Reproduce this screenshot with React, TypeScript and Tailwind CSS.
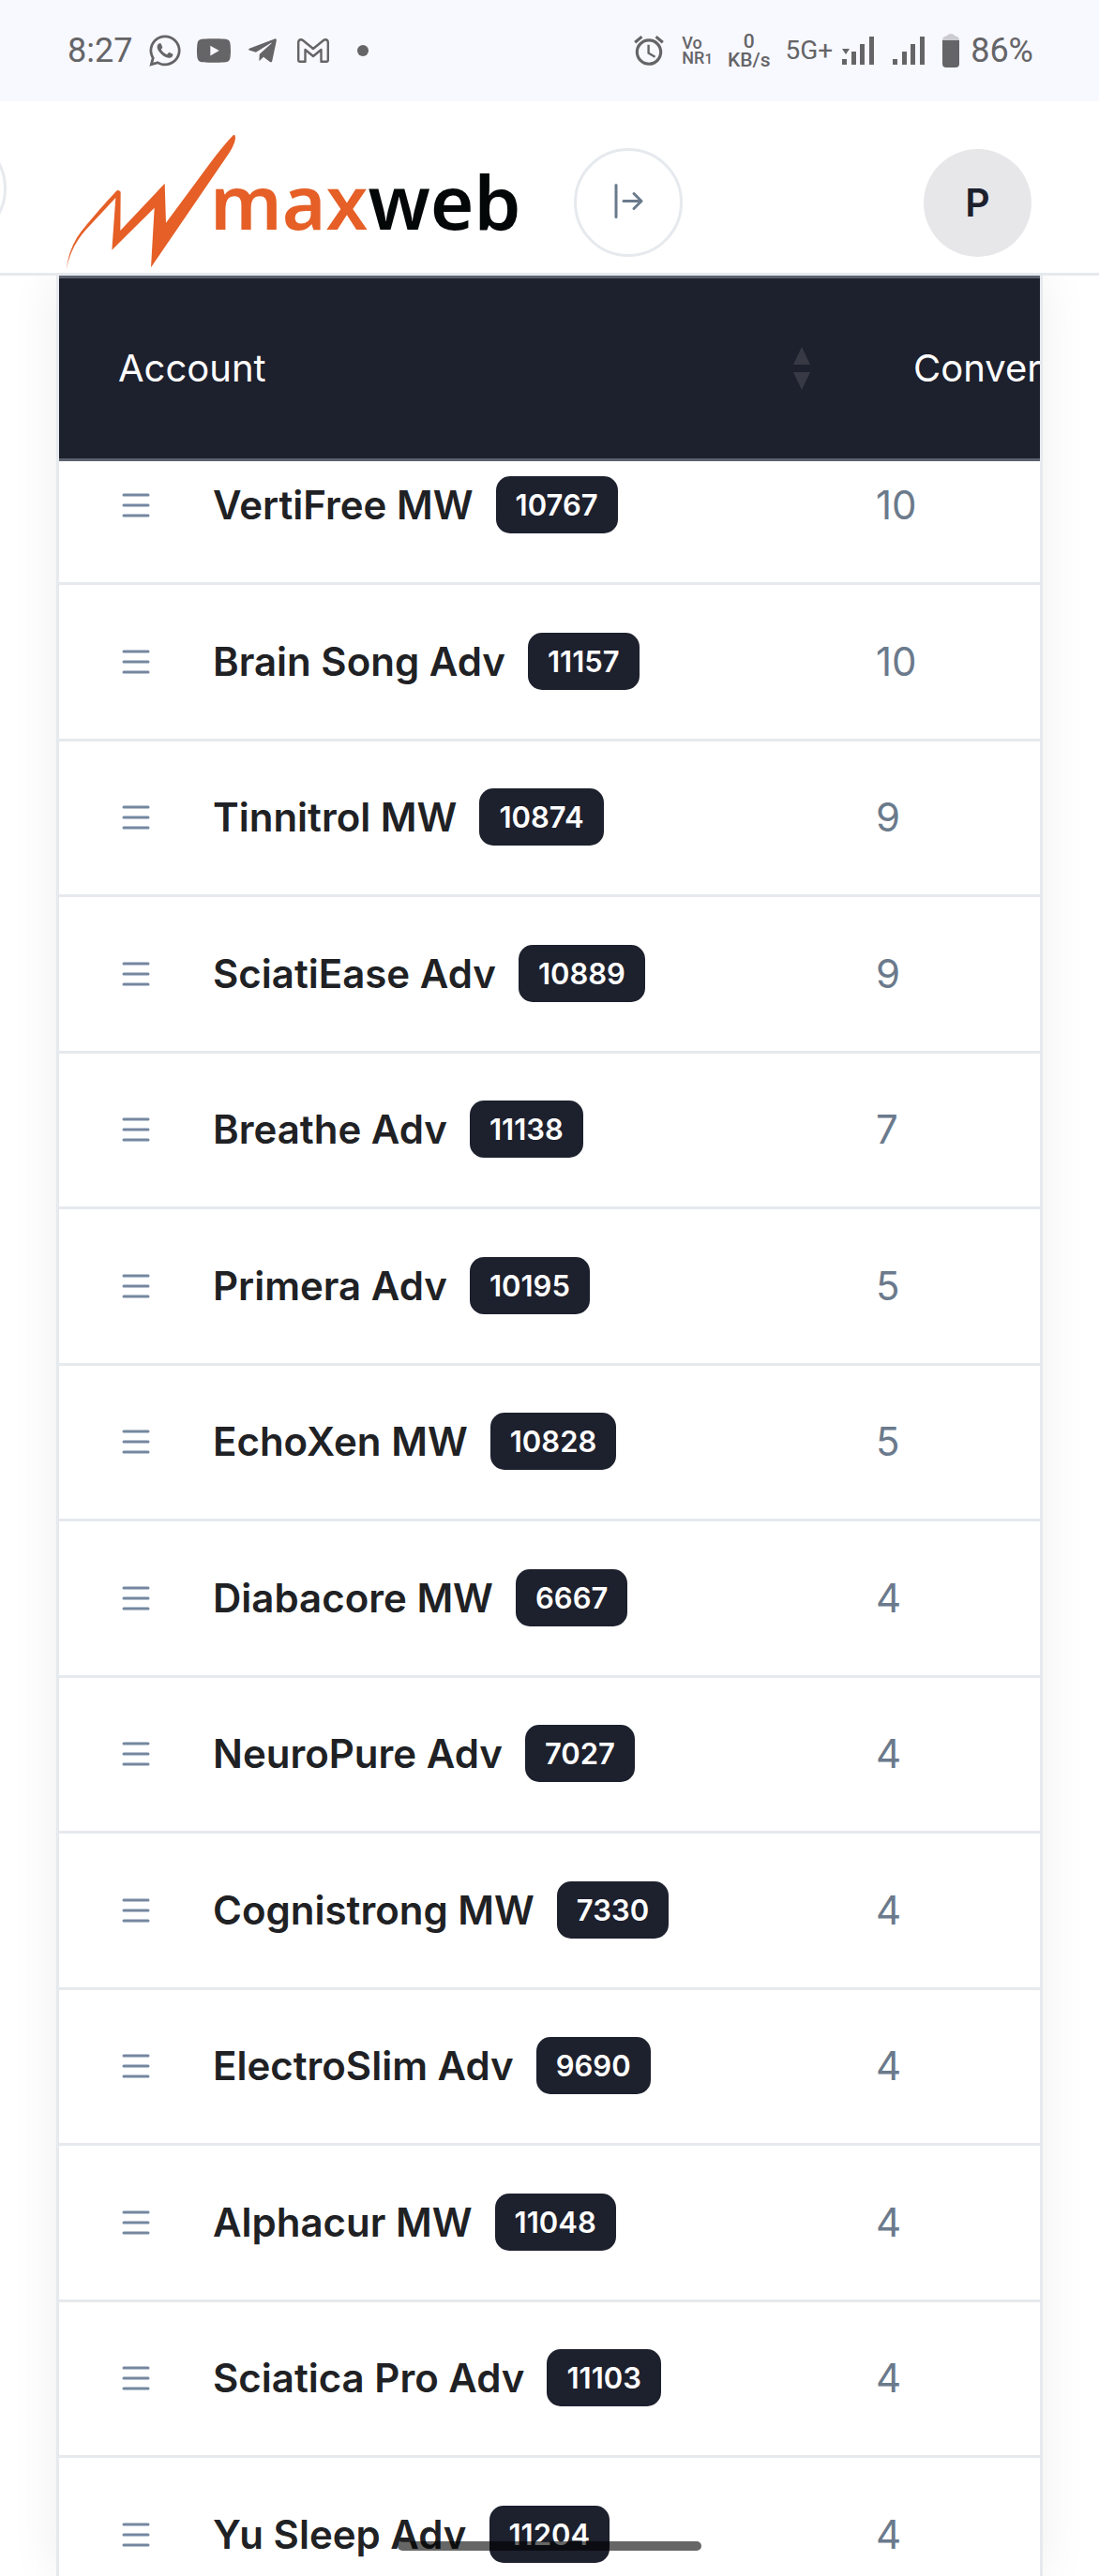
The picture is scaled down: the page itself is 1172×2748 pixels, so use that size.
import { FaTelegramPlane, FaWhatsapp, FaYoutube } from "react-icons/fa";
import { MdAlarm } from "react-icons/md";

interface Account {
  name: string;
  id: number;
  conversions: number;
}

const accounts: Account[] = [
  { name: "VertiFree MW", id: 10767, conversions: 10 },
  { name: "Brain Song Adv", id: 11157, conversions: 10 },
  { name: "Tinnitrol MW", id: 10874, conversions: 9 },
  { name: "SciatiEase Adv", id: 10889, conversions: 9 },
  { name: "Breathe Adv", id: 11138, conversions: 7 },
  { name: "Primera Adv", id: 10195, conversions: 5 },
  { name: "EchoXen MW", id: 10828, conversions: 5 },
  { name: "Diabacore MW", id: 6667, conversions: 4 },
  { name: "NeuroPure Adv", id: 7027, conversions: 4 },
  { name: "Cognistrong MW", id: 7330, conversions: 4 },
  { name: "ElectroSlim Adv", id: 9690, conversions: 4 },
  { name: "Alphacur MW", id: 11048, conversions: 4 },
  { name: "Sciatica Pro Adv", id: 11103, conversions: 4 },
  { name: "Yu Sleep Adv", id: 11204, conversions: 4 },
];

function GmailIcon() {
  return (
    <svg viewBox="0 0 34 26" className="h-[26px] w-[34px]" fill="none" stroke="currentColor" strokeWidth="2.4" strokeLinejoin="round">
      <path d="M1.2 4.5 Q1.2 1.2 4 1.2 Q5 1.2 6 2 L17 11 L28 2 Q29 1.2 30 1.2 Q32.8 1.2 32.8 4.5 V23 Q32.8 24.8 31 24.8 H25.5 V12 L17 19 L8.5 12 V24.8 H3 Q1.2 24.8 1.2 23 Z" />
    </svg>
  );
}

function SignalIcon({ withData = false }: { withData?: boolean }) {
  return (
    <svg viewBox="0 0 34 30" className="h-[30px] w-[34px]" fill="currentColor">
      <path d="M0 24h5v6H0zM10 16h5v14h-5zM19 8h5v22h-5zM29 0h5v30h-5z" />
      {withData && <path d="M0 13h8l-4 6z" />}
    </svg>
  );
}

function BatteryIcon() {
  return (
    <svg viewBox="0 0 18 36" className="h-9 w-[18px]" fill="currentColor">
      <path d="M0 7 Q0 3 5 2 Q6 0 9 0 Q12 0 13 2 Q18 3 18 7z" opacity="0.3" />
      <path d="M0 7h18v25q0 4-4 4H4q-4 0-4-4z" />
    </svg>
  );
}

function StatusBar() {
  return (
    <div className="flex h-[108px] shrink-0 items-center justify-between bg-[#f8f8ff] pl-[72px] pr-[70px] font-[Roboto,sans-serif] text-[#656567]">
      <div className="flex items-center">
        <span className="text-[36px] leading-none">8:27</span>
        <FaWhatsapp className="ml-4 size-[38px]" />
        <FaYoutube className="ml-3.5 size-[38px]" />
        <FaTelegramPlane className="ml-4 size-[34px]" />
        <span className="ml-5">
          <GmailIcon />
        </span>
        <span className="ml-[30px] size-3 rounded-full bg-[#656567]" />
      </div>
      <div className="flex items-center font-medium">
        <MdAlarm className="size-[38px]" />
        <span className="ml-4 flex flex-col text-[18px] leading-4">
          <span>Vo</span>
          <span>
            NR<span className="text-[15px] leading-none">1</span>
          </span>
        </span>
        <span className="ml-4 flex flex-col items-center text-[21px] leading-5">
          <span>0</span>
          <span>KB/s</span>
        </span>
        <span className="ml-4 text-[28px] font-normal leading-none">5G+</span>
        <span className="ml-2.5">
          <SignalIcon withData />
        </span>
        <span className="ml-5">
          <SignalIcon />
        </span>
        <span className="ml-[19px]">
          <BatteryIcon />
        </span>
        <span className="ml-3 text-[36px] font-normal leading-none">86%</span>
      </div>
    </div>
  );
}

function Logo() {
  return (
    <a href="#" className="flex items-end" aria-label="maxweb">
      <svg viewBox="30 39 546 444" className="h-[148px] w-[182px]" fill="#e55f27">
        <path d="M570 41 Q576 48 570 66 Q565 82 552 101 L303 466 L314 275 L178 410 L190 243 L95 345 Q45 400 32 474 Q40 405 75 358 C95 330 165 250 194 220 Q200 216 206 224 L205 348 L347 197 L351 323 L490 135 Q535 75 566 43 Z" />
      </svg>
      <span className="-ml-7 mb-8 font-['Noto_Sans',sans-serif] text-[80px] font-semibold leading-[90px] text-[#030708]">
        <span className="text-[#e55f27]">max</span>web
      </span>
    </a>
  );
}

function Header() {
  return (
    <header className="relative flex h-[186px] shrink-0 items-end overflow-hidden border-b-[3px] border-[#e6e9ed] bg-white pl-[70px] pr-[72px]">
      <button
        type="button"
        aria-label="Menu"
        className="absolute -left-[109px] top-[35px] size-[116px] rounded-full border-[3px] border-[#e6e9ed]"
      />
      <Logo />
      <button
        type="button"
        aria-label="Expand sidebar"
        className="mb-[17px] ml-auto flex size-[116px] items-center justify-center rounded-full border-[3px] border-[#e6e9ed] text-[#6b7a8c]"
      >
        <svg viewBox="0 0 36 42" className="h-[42px] w-9" fill="none" stroke="currentColor" strokeWidth="3" strokeLinecap="round" strokeLinejoin="round">
          <path d="M5 2.5v34M13 19.5h19M24 11.5l8 8-8 8" />
        </svg>
      </button>
      <button
        type="button"
        className="mb-[17px] ml-[257px] size-[115px] shrink-0 rounded-full bg-[#e7e7e9] text-[41px] font-semibold text-[#1d202d]"
      >
        P
      </button>
    </header>
  );
}

function SortIcon() {
  return (
    <svg viewBox="0 0 18 46" className="h-[46px] w-[18px]" fill="#373a44">
      <path d="M9 0l9 19H0zM0 27h18L9 46z" />
    </svg>
  );
}

function AccountRow({ name, id, conversions }: Account) {
  return (
    <tr className="h-[166px] border-b-[3px] border-[#e6e9ed] align-bottom first:h-[132px] even:h-[167px]">
      <td className="pb-[52px] pl-[67px]">
        <div className="flex h-[61px] items-center whitespace-nowrap">
          <button type="button" aria-label={`Options for ${name}`} className="w-[97px] shrink-0 text-[#7587a0]">
            <svg viewBox="0 0 30 26" className="h-[26px] w-[30px]" fill="none" stroke="currentColor" strokeWidth="3" strokeLinecap="round">
              <path d="M2 2h26M2 13h26M2 24h26" />
            </svg>
          </button>
          <span className="text-[42px] font-semibold leading-[61px] text-[#202124]">{name}</span>
          <span className="ml-6 rounded-[15px] bg-[#1d202d] px-[21px] text-[31px] font-semibold leading-[61px] text-white">{id}</span>
        </div>
      </td>
      <td className="pb-[52px] pl-[42px] text-[42px] leading-[61px] text-[#6b7a8c]">{conversions}</td>
    </tr>
  );
}

function AccountTable() {
  return (
    <div className="mx-[60px] min-h-0 flex-1 border-x-[3px] border-[#e6e9ed] bg-white shadow-[0_0_50px_rgba(0,0,0,0.07)]">
      <div className="h-full overflow-hidden">
        <table className="w-[1400px] table-fixed border-collapse text-left">
          <thead>
            <tr className="h-[195px] border-y-[3px] border-[#5b616e] bg-[#1d202d] text-[40px] text-white">
              <th scope="col" className="w-[829px] pl-[63px] pr-7 font-normal">
                <button type="button" className="flex w-full items-center justify-between">
                  Account
                  <SortIcon />
                </button>
              </th>
              <th scope="col" className="pl-[82px] font-normal">
                Conversions
              </th>
            </tr>
          </thead>
          <tbody>
            {accounts.map((account) => (
              <AccountRow key={account.id} {...account} />
            ))}
          </tbody>
        </table>
      </div>
    </div>
  );
}

export default function App() {
  return (
    <div className="relative flex h-screen flex-col overflow-hidden bg-white font-[Inter,sans-serif]">
      <StatusBar />
      <Header />
      <AccountTable />
      <div className="absolute bottom-[27px] left-1/2 h-2.5 w-[324px] -translate-x-1/2 rounded-full bg-black/60" />
    </div>
  );
}
